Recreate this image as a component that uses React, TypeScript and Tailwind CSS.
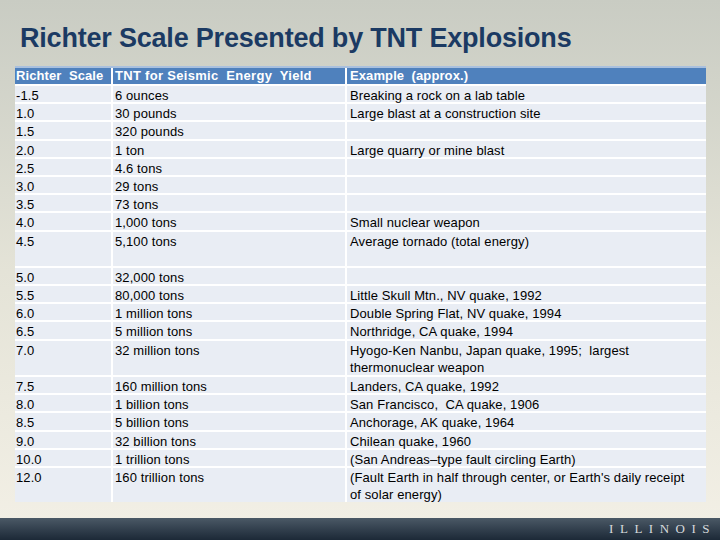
import React from 'react';

type Row = { scale: string; tnt: string; example: React.ReactNode; tall?: boolean };

const rows: Row[] = [
  { scale: '-1.5', tnt: '6 ounces', example: 'Breaking a rock on a lab table' },
  { scale: '1.0', tnt: '30 pounds', example: 'Large blast at a construction site' },
  { scale: '1.5', tnt: '320 pounds', example: '' },
  { scale: '2.0', tnt: '1 ton', example: 'Large quarry or mine blast' },
  { scale: '2.5', tnt: '4.6 tons', example: '' },
  { scale: '3.0', tnt: '29 tons', example: '' },
  { scale: '3.5', tnt: '73 tons', example: '' },
  { scale: '4.0', tnt: '1,000 tons', example: 'Small nuclear weapon' },
  { scale: '4.5', tnt: '5,100 tons', example: 'Average tornado (total energy)', tall: true },
  { scale: '5.0', tnt: '32,000 tons', example: '' },
  { scale: '5.5', tnt: '80,000 tons', example: 'Little Skull Mtn., NV quake, 1992' },
  { scale: '6.0', tnt: '1 million tons', example: 'Double Spring Flat, NV quake, 1994' },
  { scale: '6.5', tnt: '5 million tons', example: 'Northridge, CA quake, 1994' },
  {
    scale: '7.0',
    tnt: '32 million tons',
    example: <>Hyogo-Ken Nanbu, Japan quake, 1995;&nbsp; largest<br />thermonuclear weapon</>,
    tall: true,
  },
  { scale: '7.5', tnt: '160 million tons', example: 'Landers, CA quake, 1992' },
  { scale: '8.0', tnt: '1 billion tons', example: <>San Francisco,&nbsp; CA quake, 1906</> },
  { scale: '8.5', tnt: '5 billion tons', example: 'Anchorage, AK quake, 1964' },
  { scale: '9.0', tnt: '32 billion tons', example: 'Chilean quake, 1960' },
  { scale: '10.0', tnt: '1 trillion tons', example: '(San Andreas\u2013type fault circling Earth)' },
  {
    scale: '12.0',
    tnt: '160 trillion tons',
    example: <>(Fault Earth in half through center, or Earth's daily receipt<br />of solar energy)</>,
    tall: true,
  },
];

const App: React.FC = () => {
  return (
    <div className="w-[720px] h-[540px] flex flex-col overflow-hidden bg-gradient-to-b from-[#c9ccc3] via-[#e4e3d7] to-[#f3f0e6] font-['Liberation_Sans',sans-serif]">
      {/* Title */}
      <h1 className="h-[66px] pl-[20px] pt-[22px] text-[27px] leading-[32px] font-bold text-[#1b3a63] tracking-[-0.2px] whitespace-nowrap">
        Richter Scale Presented by TNT Explosions
      </h1>

      {/* Table */}
      <div className="ml-[15px] w-[691px] text-[13px] tracking-[0.1px] text-black">
        <div className="flex h-[18px] bg-[#4f81bd] border-t-2 border-[#a9c0de] text-white font-bold leading-[15px] text-[13px]">
          <div className="w-[98px] pl-[1px] border-r-2 border-white">Richter&nbsp; Scale</div>
          <div className="w-[234px] pl-[2px] border-r-2 border-white tracking-[0.3px]">TNT for Seismic&nbsp; Energy&nbsp; Yield</div>
          <div className="flex-1 pl-[3px]">Example&nbsp; (approx.)</div>
        </div>
        {rows.map(row => (
          <div
            key={row.scale}
            className={`flex bg-[#e9edf4] border-t-2 border-white leading-[18px] whitespace-nowrap ${row.tall ? 'h-[36.4px]' : 'h-[18.2px]'}`}
          >
            <div className="w-[98px] pl-[1px] pt-[1px] border-r-2 border-white">{row.scale}</div>
            <div className="w-[234px] pl-[2px] pt-[1px] border-r-2 border-white">{row.tnt}</div>
            <div className="flex-1 pl-[3px] pt-[1px] pr-[2px] leading-[17.5px]">{row.example}</div>
          </div>
        ))}
      </div>

      <div className="flex-1" />

      {/* Footer bar */}
      <div className="h-[22px] flex items-center justify-end pr-[4px] bg-gradient-to-b from-[#4b5966] to-[#1c2937]">
        <span className="text-[13px] text-[#d6d9dc] tracking-[6.5px] font-['Liberation_Serif',serif]">ILLINOIS</span>
      </div>
    </div>
  );
};

export default App;
